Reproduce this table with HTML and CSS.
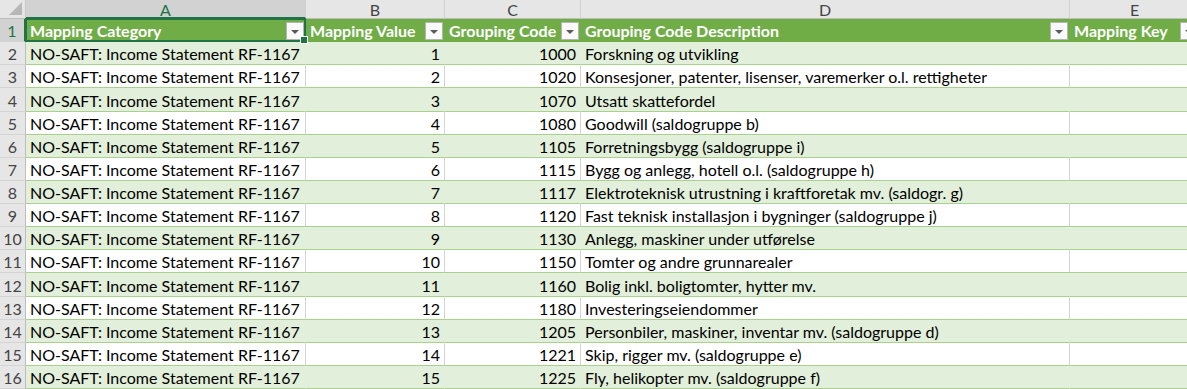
FILE: index.html
```html
<!DOCTYPE html>
<html lang="no">
<head>
<meta charset="utf-8">
<title>Mapping</title>
<link rel="stylesheet" href="styles.css">
</head>
<body>
<div class="sheet">
  <div class="row colheads">
    <div class="corner"><span class="tri"></span></div>
    <div class="colhead active">A</div>
    <div class="colhead">B</div>
    <div class="colhead">C</div>
    <div class="colhead">D</div>
    <div class="colhead">E</div>
  </div>
  <div class="row head">
    <div class="rh active">1</div>
    <div class="c sel"><span class="lbl">Mapping Category</span><span class="flt"></span><span class="handle"></span></div>
    <div class="c"><span class="lbl">Mapping Value</span><span class="flt"></span></div>
    <div class="c"><span class="lbl">Grouping Code</span><span class="flt"></span></div>
    <div class="c"><span class="lbl">Grouping Code Description</span><span class="flt"></span></div>
    <div class="c"><span class="lbl">Mapping Key</span><span class="flt"></span></div>
  </div>
  <div class="row band"><div class="rh">2</div><div class="c">NO-SAFT: Income Statement RF-1167</div><div class="c num">1</div><div class="c num">1000</div><div class="c">Forskning og utvikling</div><div class="c"></div></div>
  <div class="row"><div class="rh">3</div><div class="c">NO-SAFT: Income Statement RF-1167</div><div class="c num">2</div><div class="c num">1020</div><div class="c">Konsesjoner, patenter, lisenser, varemerker o.l. rettigheter</div><div class="c"></div></div>
  <div class="row band"><div class="rh">4</div><div class="c">NO-SAFT: Income Statement RF-1167</div><div class="c num">3</div><div class="c num">1070</div><div class="c">Utsatt skattefordel</div><div class="c"></div></div>
  <div class="row"><div class="rh">5</div><div class="c">NO-SAFT: Income Statement RF-1167</div><div class="c num">4</div><div class="c num">1080</div><div class="c">Goodwill (saldogruppe b)</div><div class="c"></div></div>
  <div class="row band"><div class="rh">6</div><div class="c">NO-SAFT: Income Statement RF-1167</div><div class="c num">5</div><div class="c num">1105</div><div class="c">Forretningsbygg (saldogruppe i)</div><div class="c"></div></div>
  <div class="row"><div class="rh">7</div><div class="c">NO-SAFT: Income Statement RF-1167</div><div class="c num">6</div><div class="c num">1115</div><div class="c">Bygg og anlegg, hotell o.l. (saldogruppe h)</div><div class="c"></div></div>
  <div class="row band"><div class="rh">8</div><div class="c">NO-SAFT: Income Statement RF-1167</div><div class="c num">7</div><div class="c num">1117</div><div class="c">Elektroteknisk utrustning i kraftforetak mv. (saldogr. g)</div><div class="c"></div></div>
  <div class="row"><div class="rh">9</div><div class="c">NO-SAFT: Income Statement RF-1167</div><div class="c num">8</div><div class="c num">1120</div><div class="c">Fast teknisk installasjon i bygninger (saldogruppe j)</div><div class="c"></div></div>
  <div class="row band"><div class="rh">10</div><div class="c">NO-SAFT: Income Statement RF-1167</div><div class="c num">9</div><div class="c num">1130</div><div class="c">Anlegg, maskiner under utførelse</div><div class="c"></div></div>
  <div class="row"><div class="rh">11</div><div class="c">NO-SAFT: Income Statement RF-1167</div><div class="c num">10</div><div class="c num">1150</div><div class="c">Tomter og andre grunnarealer</div><div class="c"></div></div>
  <div class="row band"><div class="rh">12</div><div class="c">NO-SAFT: Income Statement RF-1167</div><div class="c num">11</div><div class="c num">1160</div><div class="c">Bolig inkl. boligtomter, hytter mv.</div><div class="c"></div></div>
  <div class="row"><div class="rh">13</div><div class="c">NO-SAFT: Income Statement RF-1167</div><div class="c num">12</div><div class="c num">1180</div><div class="c">Investeringseiendommer</div><div class="c"></div></div>
  <div class="row band"><div class="rh">14</div><div class="c">NO-SAFT: Income Statement RF-1167</div><div class="c num">13</div><div class="c num">1205</div><div class="c">Personbiler, maskiner, inventar mv. (saldogruppe d)</div><div class="c"></div></div>
  <div class="row"><div class="rh">15</div><div class="c">NO-SAFT: Income Statement RF-1167</div><div class="c num">14</div><div class="c num">1221</div><div class="c">Skip, rigger mv. (saldogruppe e)</div><div class="c"></div></div>
  <div class="row band"><div class="rh">16</div><div class="c">NO-SAFT: Income Statement RF-1167</div><div class="c num">15</div><div class="c num">1225</div><div class="c">Fly, helikopter mv. (saldogruppe f)</div><div class="c"></div></div>
</div>
</body>
</html>
```
FILE: styles.css
```css
html, body {
  margin: 0;
  padding: 0;
  background: #ffffff;
  overflow: hidden;
}
.sheet {
  display: grid;
  grid-template-columns: 26px 280px 139px 136px 489px 130px;
  grid-template-rows: 19px;
  grid-auto-rows: 23.13px;
  font-family: Lato, "Liberation Sans", sans-serif;
  font-size: 16px;
  color: #000;
  width: 1200px;
}
.row { display: contents; }
.corner, .colhead, .rh, .c {
  box-sizing: border-box;
  white-space: nowrap;
  overflow: hidden;
}
.corner {
  background: #e6e6e6;
  border-right: 1px solid #c8c8c8;
  border-bottom: 1px solid #bdbdbd;
  position: relative;
}
.tri {
  position: absolute;
  right: 3px;
  bottom: 3px;
  width: 0;
  height: 0;
  border-left: 13px solid transparent;
  border-bottom: 13px solid #b7b7b7;
}
.colhead {
  background: #e6e6e6;
  border-right: 1px solid #d0d0d0;
  border-bottom: 1px solid #bdbdbd;
  color: #444;
  text-align: center;
  line-height: 19px;
  font-size: 16px;
}
.colhead.active {
  background: #d2d2d2;
  color: #217346;
  border-bottom: 2px solid #217346;
}
.rh {
  background: #e6e6e6;
  border-right: 1px solid #bdbdbd;
  border-bottom: 1px solid #d4d4d4;
  color: #444;
  text-align: center;
  font-size: 16px;
  display: flex;
  align-items: flex-end;
  justify-content: center;
  padding-bottom: 1px;
}
.rh.active {
  background: #d2d2d2;
  color: #217346;
  border-right: 2px solid #217346;
}
.c {
  display: flex;
  align-items: flex-end;
  padding: 0 4px 1px 4px;
  background: #ffffff;
  border-right: 1px solid #d4d4d4;
  border-bottom: 1px solid #a9d08e;
}
.c.num { justify-content: flex-end; }
.band .c {
  background: #e2efda;
  border-right-color: #e2efda;
}
.head .c {
  background: #70ad47;
  border-right-color: #70ad47;
  border-bottom-color: #70ad47;
  color: #ffffff;
  font-weight: bold;
  justify-content: space-between;
  padding-right: 1px;
  position: relative;
  overflow: visible;
}
.lbl { display: block; }
.flt {
  width: 18px;
  height: 18px;
  box-sizing: border-box;
  background: #fafafa;
  border: 1px solid #b5b5b5;
  position: relative;
  margin-bottom: 0;
  flex: none;
}
.flt::after {
  content: "";
  position: absolute;
  left: 4px;
  top: 7px;
  border-left: 4px solid transparent;
  border-right: 4px solid transparent;
  border-top: 4px solid #5a5a5a;
}
.sel::before {
  content: "";
  position: absolute;
  left: -1px;
  top: -1px;
  right: -1px;
  bottom: -1px;
  border: 2px solid #217346;
  pointer-events: none;
}
.handle {
  position: absolute;
  right: -3px;
  bottom: -3px;
  width: 6px;
  height: 6px;
  background: #217346;
  border: 1px solid #ffffff;
  z-index: 2;
}
```
